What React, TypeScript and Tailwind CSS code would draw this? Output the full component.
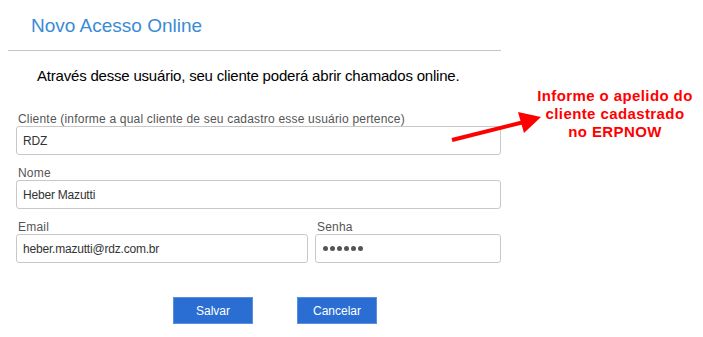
import React from 'react';

const font = { fontFamily: '"Liberation Sans", Arial, sans-serif' };

const boxCls =
  'h-[29px] w-full rounded-[3px] border border-[#c8c8c8] bg-white px-[6px] text-[12px] tracking-[-0.2px] text-[#333] outline-none';

function Field({ label, value, className = '' }: { label: string; value: string; className?: string }) {
  return (
    <div className={`flex flex-col ${className}`}>
      <label className="pl-[2px] text-[12px] leading-[14px] tracking-[0.2px] text-[#555]">{label}</label>
      <input type="text" value={value} readOnly className={boxCls} style={font} />
    </div>
  );
}

function PasswordField({ label, length, className = '' }: { label: string; length: number; className?: string }) {
  return (
    <div className={`flex flex-col ${className}`}>
      <label className="pl-[2px] text-[12px] leading-[14px] tracking-[0.2px] text-[#555]">{label}</label>
      <div className={`${boxCls} flex items-center gap-[2px] pl-[7px]`}>
        {Array.from({ length }).map((_, i) => (
          <span key={i} className="h-[5px] w-[5px] rounded-full bg-[#555]" />
        ))}
      </div>
    </div>
  );
}

export default function App() {
  return (
    <div className="relative h-[337px] w-[703px] bg-white" style={font}>
      <div className="w-[501px] pt-[15px]">
        <h1 className="pl-[31px] text-[19px] leading-[22px] text-[#3a8bd5]">Novo Acesso Online</h1>
        <div className="ml-[8px] mt-[13px] h-px bg-[#c4c4c4]" />
        <p className="mt-[16px] pl-[37px] text-[15px] leading-[18px] tracking-[-0.2px] text-black">
          Através desse usuário, seu cliente poderá abrir chamados online.
        </p>

        <div className="ml-[16px] mt-[27px] flex flex-col gap-[11px]">
          <Field label="Cliente (informe a qual cliente de seu cadastro esse usuário pertence)" value="RDZ" />
          <Field label="Nome" value="Heber Mazutti" />
          <div className="flex gap-[7px]">
            <Field label="Email" value="heber.mazutti@rdz.com.br" className="w-[292px]" />
            <PasswordField label="Senha" length={6} className="flex-1" />
          </div>
        </div>

        <div className="mt-[34px] flex gap-[44px] pl-[173px]">
          <button className="h-[27px] w-[80px] border border-[#5b8fd8] bg-[#2a6ed3] text-[12px] text-white">Salvar</button>
          <button className="h-[27px] w-[80px] border border-[#5b8fd8] bg-[#2a6ed3] text-[12px] text-white">Cancelar</button>
        </div>
      </div>

      {/* annotation */}
      <div className="absolute left-[515px] top-[87px] w-[200px] text-center text-[15px] font-bold leading-[18px] tracking-[0.4px] text-[#ff0000]">
        Informe o apelido do
        <br />
        cliente cadastrado
        <br />
        no ERPNOW
      </div>
      <svg className="absolute left-0 top-0" width="703" height="337" viewBox="0 0 703 337">
        <line x1="452" y1="140" x2="524" y2="122" stroke="#ff0000" strokeWidth="4" />
        <polygon points="541,117 518,112 524,133" fill="#ff0000" />
      </svg>
    </div>
  );
}
